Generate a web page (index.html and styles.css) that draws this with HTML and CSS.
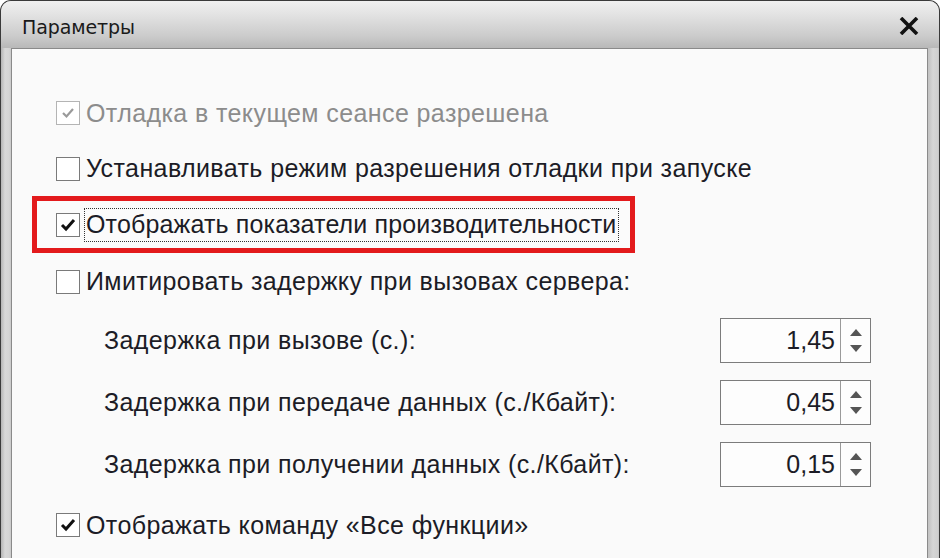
FILE: index.html
```html
<!DOCTYPE html>
<html lang="ru">
<head>
<meta charset="utf-8">
<title>Параметры</title>
<link rel="stylesheet" href="styles.css">
</head>
<body>
<div class="window">
  <div class="titlebar">
    <span class="title">Параметры</span>
    <svg class="close" width="20" height="18" viewBox="0 0 20 18"><path d="M2 1 L18 17 M18 1 L2 17" stroke="#111" stroke-width="3.6" stroke-linecap="butt"/></svg>
  </div>
  <div class="content">
    <div class="row r1">
      <span class="cb disabled"><svg width="14" height="12" viewBox="0 0 14 12"><path d="M2 6 L5.5 9.5 L12 2" fill="none" stroke="#9a9a9a" stroke-width="2.2"/></svg></span>
      <span class="label muted">Отладка в текущем сеансе разрешена</span>
    </div>
    <div class="row r2">
      <span class="cb"></span>
      <span class="label">Устанавливать режим разрешения отладки при запуске</span>
    </div>
    <div class="row r3">
      <div class="redbox">
        <span class="cb"><svg width="16" height="14" viewBox="0 0 16 14"><path d="M2 7 L6 11 L14 2" fill="none" stroke="#111" stroke-width="3"/></svg></span>
        <span class="label focus">Отображать показатели производительности</span>
      </div>
    </div>
    <div class="row r4">
      <span class="cb"></span>
      <span class="label">Имитировать задержку при вызовах сервера:</span>
    </div>
    <div class="sub s1">
      <span class="label">Задержка при вызове (с.):</span>
      <div class="spin"><span class="val">1,45</span><span class="btns"><i class="up"></i><i class="down"></i></span></div>
    </div>
    <div class="sub s2">
      <span class="label">Задержка при передаче данных (с./Кбайт):</span>
      <div class="spin"><span class="val">0,45</span><span class="btns"><i class="up"></i><i class="down"></i></span></div>
    </div>
    <div class="sub s3">
      <span class="label">Задержка при получении данных (с./Кбайт):</span>
      <div class="spin"><span class="val">0,15</span><span class="btns"><i class="up"></i><i class="down"></i></span></div>
    </div>
    <div class="row r5">
      <span class="cb"><svg width="16" height="14" viewBox="0 0 16 14"><path d="M2 7 L6 11 L14 2" fill="none" stroke="#111" stroke-width="3"/></svg></span>
      <span class="label">Отображать команду «Все функции»</span>
    </div>
  </div>
</div>
</body>
</html>
```

FILE: styles.css
```css
* { box-sizing: border-box; }
html, body { margin: 0; padding: 0; background: #fff; }
body { width: 940px; height: 558px; overflow: hidden; font-family: "Liberation Sans", Arial, sans-serif; }

.window {
  width: 940px;
  height: 558px;
  border: 1px solid #3a3a3a;
  border-bottom: none;
  border-radius: 11px 11px 0 0;
  background: linear-gradient(to right, #b4b4b4 0, #d8d8d8 4px, #d4d4d4 8px, #c4c4c4 11px, #c4c4c4 928px, #d6d6d6 932px, #cfcfcf 937px, #a8a8a8 940px);
  display: flex;
  flex-direction: column;
  overflow: hidden;
}

.titlebar {
  height: 47px;
  flex: none;
  display: flex;
  align-items: center;
  justify-content: space-between;
  padding: 4px 20px 0 21px;
  background: linear-gradient(to bottom, #f0f0f0 0, #e2e2e2 30%, #cbcbcb 75%, #b8b8b8 100%);
}
.title { font-family: "DejaVu Sans", sans-serif; font-size: 19px; color: #1a1a1a; letter-spacing: -0.1px; }
.close { display: block; margin-top: -2px; }

.content {
  flex: 1;
  margin: 0 11px 0 10px;
  background: #fafafa;
  border: 1px solid #8a8a8a;
  border-bottom: none;
  padding-top: 36px;
  display: flex;
  flex-direction: column;
}

.row { display: flex; align-items: center; padding-left: 44px; }
.r1 { height: 56px; }
.r2 { height: 55px; }
.r3 { height: 57px; padding-left: 20px; }
.r4 { height: 57px; }
.r5 { height: 60px; }

.label { font-size: 25px; color: #1c1c26; white-space: nowrap; letter-spacing: 0.4px; }
.muted { color: #8c8c8c; }

.cb {
  width: 24px; height: 24px; flex: none;
  border: 1px solid #7a7a7a;
  background: #fff;
  margin-right: 6px;
  display: flex; align-items: center; justify-content: center;
}
.cb.disabled { border-color: #b4b4b4; }

.redbox {
  display: flex; align-items: center;
  height: 57px;
  border: 5px solid #e31a1c;
  padding: 0 11px 0 19px;
  background: #fbfbfb;
}
.redbox .cb { margin-right: 4px; }
.focus { border: 1px dotted #333; padding: 1px 2px 2px 1px; letter-spacing: 0.15px; }

.sub {
  display: flex; align-items: center; justify-content: space-between;
  padding-left: 92px; padding-right: 56px;
}
.s1 { height: 61px; }
.s2 { height: 62px; }
.s3 { height: 62px; }

.spin {
  width: 151px; height: 45px;
  border: 1px solid #7c7c7c;
  background: #fdfdfd;
  display: flex;
}
.val {
  flex: 1; text-align: right; font-size: 25px; color: #1c1c26;
  padding-right: 5px; line-height: 43px; border-right: 1px solid #9a9a9a;
}
.btns { width: 29px; display: flex; flex-direction: column; align-items: center; justify-content: center; gap: 9px; }
.btns i { display: block; width: 0; height: 0; border-left: 6px solid transparent; border-right: 6px solid transparent; }
.btns .up { border-bottom: 7px solid #555; }
.btns .down { border-top: 7px solid #555; }
```
